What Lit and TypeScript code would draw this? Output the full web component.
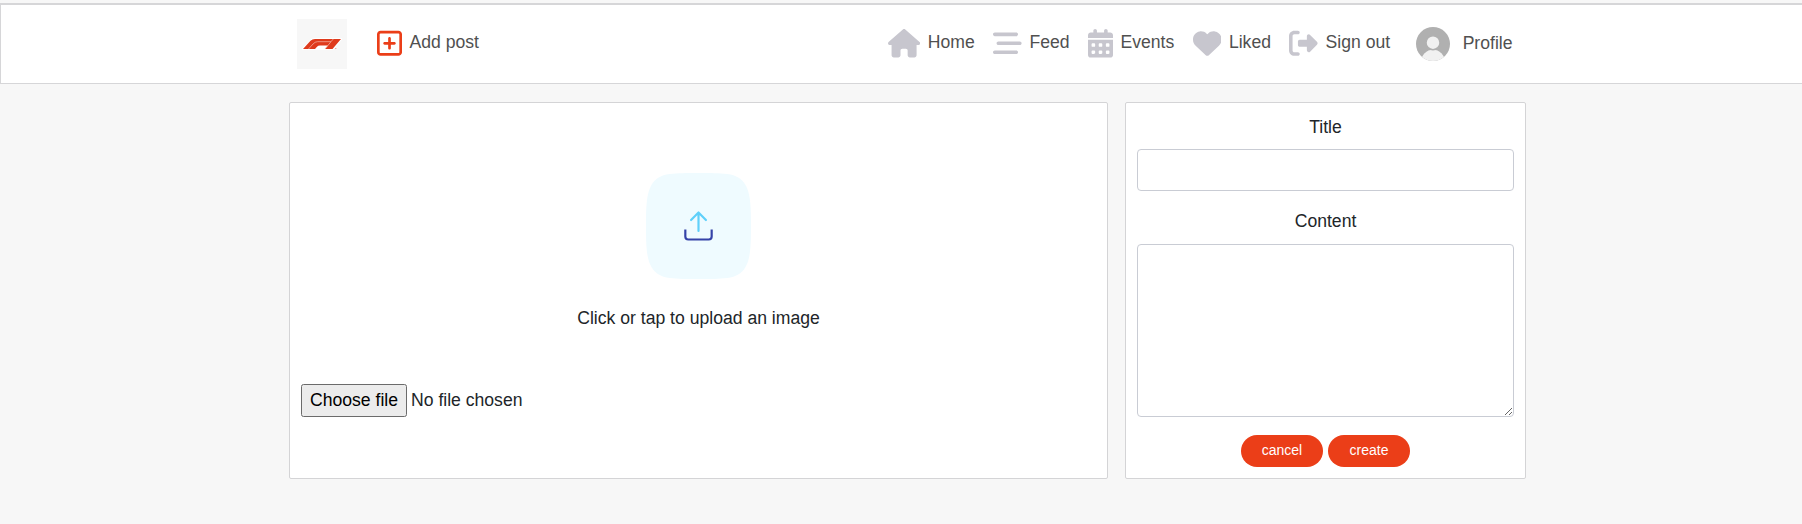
import { LitElement, html, css, svg } from "lit";
import { customElement } from "lit/decorators.js";

const ICONS = {
  plus: { w: 448, d: "M64 80c-8.800 0-16 7.200-16 16V416c0 8.800 7.200 16 16 16H384c8.800 0 16-7.200 16-16V96c0-8.800-7.200-16-16-16H64zM0 96C0 60.700 28.700 32 64 32H384c35.300 0 64 28.700 64 64V416c0 35.300-28.700 64-64 64H64c-35.300 0-64-28.700-64-64V96zM200 344V280H136c-13.300 0-24-10.700-24-24s10.700-24 24-24h64V168c0-13.300 10.700-24 24-24s24 10.700 24 24v64h64c13.300 0 24 10.700 24 24s-10.700 24-24 24H248v64c0 13.300-10.700 24-24 24s-24-10.700-24-24z" },
  home: { w: 576, d: "M575.8 255.5c0 18-15 32.1-32 32.1h-32l.7 160.2c0 2.700-.2 5.400-.5 8.100V472c0 22.100-17.900 40-40 40H456c-1.100 0-2.200 0-3.300-.1c-1.400 .1-2.800 .1-4.200 .1H416 392c-22.100 0-40-17.900-40-40V448 384c0-17.700-14.300-32-32-32H256c-17.700 0-32 14.300-32 32v64 24c0 22.100-17.900 40-40 40H160 128.100c-1.500 0-3-.1-4.500-.2c-1.200 .1-2.400 .2-3.600 .2H104c-22.100 0-40-17.900-40-40V360c0-.9 0-1.900 .1-2.800V287.600H32c-18 0-32-14-32-32.100c0-9 3-17 10-24L266.400 8c7-7 15-8 22-8s15 2 21 7L564.800 231.500c8 7 12 15 11 24z" },
  feed: { w: 512, d: "M0 96C0 78.300 14.300 64 32 64H416c17.700 0 32 14.300 32 32s-14.300 32-32 32H32C14.300 128 0 113.700 0 96zM64 256c0-17.700 14.300-32 32-32H480c17.700 0 32 14.300 32 32s-14.300 32-32 32H96c-17.700 0-32-14.300-32-32zM448 416c0 17.700-14.300 32-32 32H32c-17.700 0-32-14.300-32-32s14.300-32 32-32H416c17.700 0 32 14.300 32 32z" },
  events: {
    w: 448,
    d: "M128 0c17.700 0 32 14.300 32 32V64H288V32c0-17.700 14.300-32 32-32s32 14.300 32 32V64h48c26.500 0 48 21.500 48 48v48H0V112C0 85.500 21.500 64 48 64H96V32c0-17.700 14.300-32 32-32zM0 192H448V464c0 26.500-21.500 48-48 48H48c-26.500 0-48-21.500-48-48V192z" +
      [272, 400].map((y) => [64, 192, 320].map((x) =>
        `M${x} ${y}v32c0 8.800 7.200 16 16 16h32c8.800 0 16-7.200 16-16v-32c0-8.800-7.200-16-16-16h-32c-8.800 0-16 7.200-16 16z`).join("")).join(""),
  },
  liked: { w: 512, d: "M47.600 300.400L228.300 469.100c7.500 7 17.400 10.900 27.700 10.900s20.200-3.900 27.700-10.900L464.400 300.400c30.400-28.300 47.600-68 47.600-109.500v-5.800c0-69.900-50.500-129.500-119.400-141C347 36.500 300.600 51.400 268 84L256 96 244 84c-32.600-32.600-79-47.500-124.600-39.900C50.500 55.600 0 115.200 0 185.100v5.800c0 41.500 17.200 81.200 47.600 109.500z" },
  signout: { w: 512, d: "M377.900 105.900L500.700 228.700c7.200 7.200 11.300 17.100 11.300 27.300s-4.100 20.100-11.300 27.300L377.900 406.100c-6.400 6.400-15 9.900-24 9.900c-18.700 0-33.900-15.200-33.900-33.900l0-62.100-128 0c-17.700 0-32-14.300-32-32l0-64c0-17.700 14.300-32 32-32l128 0 0-62.100c0-18.700 15.200-33.900 33.900-33.900c9 0 17.600 3.600 24 9.900zM160 96L96 96c-17.700 0-32 14.300-32 32l0 256c0 17.700 14.300 32 32 32l64 0c17.700 0 32 14.300 32 32s-14.300 32-32 32l-64 0c-53 0-96-43-96-96L0 128C0 75 43 32 96 32l64 0c17.700 0 32 14.300 32 32s-14.300 32-32 32z" },
};

const icon = (name: keyof typeof ICONS) => html`
  <svg class="icon" viewBox="0 0 ${ICONS[name].w} 512" aria-hidden="true">
    ${svg`<path fill="currentColor" fill-rule=${name === "events" ? "evenodd" : "nonzero"} d=${ICONS[name].d}></path>`}
  </svg>`;

@customElement("nav-bar")
class NavBar extends LitElement {
  static styles = css`
    :host { display: block; box-sizing: border-box; height: 81px; background: #fff;
      border: 1px solid #d6d6d8; border-top: 2px solid #d6d6d8; border-right: 0; }
    .inner { display: flex; align-items: center; height: 78px; padding: 0 289.500px 0 296px; }
    .logo { display: block; width: 50px; height: 50px; background: #f7f7f7; margin-right: 30px; }
    .item { display: flex; align-items: center; color: #505050; line-height: 26px; white-space: nowrap; margin-top: -1px; }
    .icon { display: block; height: 28.600px; margin-right: 7.500px; color: #c7c6ce; }
    .add .icon { color: #eb3e18; }
    .label { padding-bottom: 4px; }
    .links { display: flex; align-items: center; gap: 18.500px; margin-left: auto; }
    .profile { margin-left: 7px; }
    .profile .label { padding-bottom: 2px; }
    .avatar { display: block; width: 34px; height: 34px; margin-right: 13px; }
  `;
  render() {
    const links = [["home", "Home"], ["feed", "Feed"], ["events", "Events"], ["liked", "Liked"], ["signout", "Sign out"]] as const;
    return html`
      <nav class="inner">
        <svg class="logo" viewBox="0 0 50 50" role="img" aria-label="F1">
          <path fill="#fff" stroke="#fff" stroke-width="2" stroke-linejoin="round" d="M6 30 14 21.500Q15.500 20 18 20H44L35.500 30Z" />
          <path fill="#df3a1c" d="M6 30 13.500 21.800Q15.200 20 18 20H44L35.500 30H28L31 26.500H23Q21 26.500 20 27.700L18 30Z" />
          <path fill="none" stroke="#f4b9ab" stroke-width=".7" d="M11.500 30 16 25Q18 22.700 20.500 22.700H34L36.300 20M34 22.700 28 30" />
          <circle cx="38.800" cy="29.500" r=".6" fill="#e9866f" />
        </svg>
        <div class="item add">${icon("plus")}<span class="label">Add post</span></div>
        <div class="links">
          ${links.map(([id, text]) => html`<div class="item">${icon(id)}<span class="label">${text}</span></div>`)}
          <div class="item profile">
            <svg class="avatar" viewBox="0 0 34 34">
              <defs><clipPath id="round"><circle cx="17" cy="17" r="17" /></clipPath></defs>
              <g clip-path="url(#round)">
                <rect width="34" height="34" fill="#b0b0b0" />
                <circle cx="17" cy="34.500" r="11.800" fill="#f1f1f1" />
                <circle cx="17" cy="15.700" r="7" fill="#f1f1f1" stroke="#b0b0b0" stroke-width="1.500" />
              </g>
            </svg>
            <span class="label">Profile</span>
          </div>
        </div>
      </nav>`;
  }
}

@customElement("upload-panel")
class UploadPanel extends LitElement {
  static styles = css`
    :host { display: flex; flex-direction: column; align-items: center; box-sizing: border-box;
      background: #fff; border: 1px solid #d4d4d6; border-radius: 2px; padding: 70px 11px 0; }
    .tile { display: block; width: 105px; height: 106px; }
    .hint { line-height: 26px; margin-top: 26px; }
    .file { display: flex; align-items: center; align-self: stretch; gap: 4px; margin-top: 53px; }
    .choose { box-sizing: border-box; height: 33px; width: 106px; padding: 0; font: inherit; color: #000;
      background: #ececec; border: 1px solid #6b6b6b; border-radius: 2.500px; white-space: nowrap; }
  `;
  render() {
    return html`
      <svg class="tile" viewBox="0 0 106 106" preserveAspectRatio="none" fill="none" stroke-linecap="round" stroke-linejoin="round">
        <path fill="#effbff" d="M0 53C0 35 .5 22 4.500 14 8.500 5.500 15 2.200 24 1 32 0 41 0 53 0S74 0 82 1C91 2.200 97.500 5.500 101.500 14 105.500 22 106 35 106 53S105.500 84 101.500 92C97.500 100.500 91 103.800 82 105 74 106 65 106 53 106S32 106 24 105C15 103.800 8.500 100.500 4.500 92 .5 84 0 71 0 53Z" />
        <path stroke="#5fd0fa" stroke-width="2.200" d="M53 58V40M45.500 47 53 39.500 60.500 47" />
        <path stroke="#3543a8" stroke-width="2.200" stroke-linecap="butt" d="M39.700 56.500V63.500Q39.700 66.500 42.700 66.500H63.300Q66.300 66.500 66.300 63.500V56.500" />
      </svg>
      <div class="hint">Click or tap to upload an image</div>
      <div class="file"><button class="choose">Choose file</button><span>No file chosen</span></div>`;
  }
}

@customElement("post-form")
class PostForm extends LitElement {
  static styles = css`
    :host { display: flex; flex-direction: column; align-items: center; box-sizing: border-box;
      background: #fff; border: 1px solid #d4d4d6; border-radius: 2px; padding: 11px 11px 0; }
    .label { line-height: 26px; }
    .field { display: block; box-sizing: border-box; width: 377px; margin: 9px 0 0; padding: 6px 12px;
      font: inherit; background: #fff; border: 1px solid #c9ccd4; border-radius: 4px; outline: none; }
    .title { height: 42px; margin-bottom: 17px; }
    .content { height: 173px; margin-top: 10px; resize: vertical; }
    .actions { display: flex; gap: 5px; margin-top: 18px; }
    .btn { width: 82px; height: 32px; padding: 0 0 2px; border: 0; border-radius: 16px; background: #eb3e18;
      color: #fff; font: 14px "Liberation Sans", Arial, sans-serif; }
  `;
  render() {
    return html`
      <label class="label" for="title">Title</label>
      <input class="field title" id="title" type="text" />
      <label class="label" for="content">Content</label>
      <textarea class="field content" id="content"></textarea>
      <div class="actions"><button class="btn">cancel</button><button class="btn">create</button></div>`;
  }
}

@customElement("app-root")
class AppRoot extends LitElement {
  static styles = css`
    :host { display: block; box-sizing: border-box; height: 524px; padding-top: 3px; background: #f7f7f7;
      color: #212529; font: 17.600px "Liberation Sans", Arial, sans-serif; overflow: hidden; }
    .main { display: grid; grid-template-columns: 819px 401px; gap: 17px; height: 377px; margin: 18px 0 0 289px; }
  `;
  render() {
    return html`<nav-bar></nav-bar>
      <main class="main"><upload-panel></upload-panel><post-form></post-form></main>`;
  }
}
